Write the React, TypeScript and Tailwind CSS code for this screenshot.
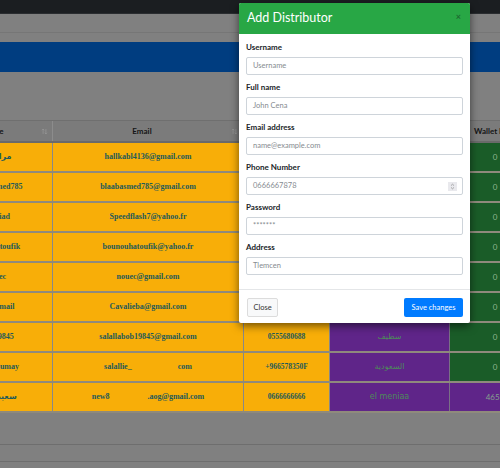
import React from "react";

type Row = {
  name: string;
  email: React.ReactNode;
  phone: string;
  addr: string;
  wallet: string;
  walletPurple?: boolean;
};

const rows: Row[] = [
  { name: "مراد الم", email: "hallkabl4136@gmail.com", phone: "0556644136", addr: "الجزائر", wallet: "0" },
  { name: "blaabasmed785", email: "blaabasmed785@gmail.com", phone: "0661785785", addr: "وهران", wallet: "0" },
  { name: "ben fiad", email: "Speedflash7@yahoo.fr", phone: "0770123456", addr: "سطيف", wallet: "0" },
  { name: "bounou toufik", email: "bounouhatoufik@yahoo.fr", phone: "0550987654", addr: "باتنة", wallet: "0" },
  { name: "nouec", email: "nouec@gmail.com", phone: "0666112233", addr: "بسكرة", wallet: "0" },
  { name: "cavalgmail", email: "Cavalieba@gmail.com", phone: "0699445566", addr: "عنابة", wallet: "0" },
  { name: "salal19845", email: "salallabob19845@gmail.com", phone: "0555680688", addr: "سطيف", wallet: "0" },
  {
    name: "salah djumay",
    email: (
      <>
        <span>salallie_</span>
        <span className="inline-block w-[46px]" />
        <span>com</span>
      </>
    ),
    phone: "+966578350F",
    addr: "السعودية",
    wallet: "0",
  },
  {
    name: "سعيد سلي",
    email: (
      <>
        <span>new8</span>
        <span className="inline-block w-[38px]" />
        <span>.aog@gmail.com</span>
      </>
    ),
    phone: "0666666666",
    addr: "el meniaa",
    wallet: "4659",
    walletPurple: true,
  },
];

function SortIcon() {
  return (
    <svg width="7" height="7" viewBox="0 0 10 10" className="shrink-0">
      <path d="M3 1.5 V8.5 M1.3 3.2 L3 1.5 L4.7 3.2" stroke="#9a9a9a" strokeWidth="1" fill="none" />
      <path d="M7 1.5 V8.5 M5.3 6.8 L7 8.5 L8.7 6.8" stroke="#9a9a9a" strokeWidth="1" fill="none" />
    </svg>
  );
}

function Field({ label, placeholder, spinner }: { label: string; placeholder: string; spinner?: boolean }) {
  return (
    <div className="mb-[7px] flex flex-col">
      <div className="h-[11px] mb-[4px] text-[8px] leading-[11px] font-bold text-[#212529]">{label}</div>
      <div className="h-[18px] rounded-[2px] border border-[#ced4da] bg-white flex items-center pl-[6px] pr-[5px]">
        <span className="flex-1 text-[7.5px] text-[#868b90]">{placeholder}</span>
        {spinner && (
          <span className="w-[9px] h-[9px] bg-[#e9e9ed] flex items-center justify-center">
            <svg width="5" height="7" viewBox="0 0 5 7">
              <path d="M1 2.6 L2.5 1.2 L4 2.6 M1 4.4 L2.5 5.8 L4 4.4" stroke="#8a8a8a" strokeWidth="0.7" fill="none" />
            </svg>
          </span>
        )}
      </div>
    </div>
  );
}

export default function App() {
  const cellText = "text-[8px] font-bold text-[#1d5a5a]";
  return (
    <div
      className="relative w-[500px] h-[468px] overflow-hidden bg-[#808080]"
      style={{ fontFamily: "Lato, 'Noto Sans', sans-serif" }}
    >
      {/* navbar */}
      <div className="h-[14px] bg-[#1b1e21] border-b border-[#2a2d30]" />
      <div className="h-[19px] border-b border-[#767676]" />
      <div className="h-[9px]" />
      {/* blue band */}
      <div className="h-[30px] bg-[#003d80]" />
      <div className="h-[48px]" />

      {/* table */}
      <div className="w-full overflow-hidden">
        <div className="ml-[-60px] w-[600px]">
          {/* header */}
          <div className="grid grid-cols-[113px_191px_86px_120px_90px] h-[23px] bg-[#7b7b7b] border-t border-[#6f6f6f] border-b-2 border-b-[#6a6a6a]">
            <div className="flex items-center border-r border-[#8c8c8c] pr-[4px]">
              <span className="flex-1 text-center text-[8px] font-bold text-[#151515] pr-[10px]">Username</span>
              <SortIcon />
            </div>
            <div className="flex items-center border-r border-[#8c8c8c] pr-[5px]">
              <span className="flex-1 text-center text-[8px] font-bold text-[#151515]">Email</span>
              <SortIcon />
            </div>
            <div className="flex items-center border-r border-[#8c8c8c] pr-[5px]">
              <span className="flex-1 text-center text-[8px] font-bold text-[#151515]">Phone</span>
              <SortIcon />
            </div>
            <div className="flex items-center border-r border-[#8c8c8c] pr-[5px]">
              <span className="flex-1 text-center text-[8px] font-bold text-[#151515]">Address</span>
              <SortIcon />
            </div>
            <div className="flex items-center pl-[24px]">
              <span className="text-[8px] font-bold text-[#151515] whitespace-nowrap">Wallet Balance</span>
            </div>
          </div>
          {/* rows */}
          {rows.map((r, i) => (
            <div
              key={i}
              className="grid grid-cols-[113px_191px_86px_120px_90px] h-[30px] border-b-2 border-[#8f8a7c]"
            >
              <div
                className={`bg-[#f8ae08] border-r border-[#888888] flex items-center justify-center whitespace-nowrap ${cellText}`}
                style={{ fontFamily: "'Liberation Serif', 'DejaVu Sans', serif" }}
              >
                {r.name}
              </div>
              <div
                className={`bg-[#f8ae08] border-r border-[#888888] flex items-center justify-center whitespace-nowrap ${cellText}`}
                style={{ fontFamily: "'Liberation Serif', serif" }}
              >
                {r.email}
              </div>
              <div
                className="bg-[#f8ae08] border-r border-[#888888] flex items-center justify-center whitespace-nowrap text-[7.5px] font-bold text-[#1d5a5a]"
                style={{ fontFamily: "'Liberation Serif', serif" }}
              >
                {r.phone}
              </div>
              <div
                className="bg-[#5f2589] border-r border-[#7a6f86] flex items-center justify-center whitespace-nowrap text-[8px] text-[#4d8a5a]"
                style={{ fontFamily: "'DejaVu Sans', sans-serif" }}
              >
                {r.addr}
              </div>
              <div
                className={`${r.walletPurple ? "bg-[#5f2589] text-[#84a08e]" : "bg-[#1a5c28] text-[#8fb48f]"} flex items-center justify-center text-[8px]`}
              >
                {r.wallet}
              </div>
            </div>
          ))}
        </div>
      </div>

      {/* below table */}
      <div className="h-[32px] border-b border-[#6e6e6e]" />
      <div className="h-[17px] border-b border-[#6e6e6e]" />

      {/* modal */}
      <div className="absolute left-[239px] top-[3px] w-[231px] h-[320px] bg-white rounded-[2px] shadow-[0_3px_9px_rgba(0,0,0,0.55)] flex flex-col overflow-hidden">
        <div className="h-[31px] bg-[#28a745] flex items-center justify-between pl-[8px] pr-[9px]">
          <span className="text-[12.5px] text-white">Add Distributor</span>
          <span className="text-[9px] font-bold text-[#1d6b31] leading-none mb-[4px]">×</span>
        </div>
        <div className="pt-[8px] pb-[7px] px-[7px] border-b border-[#e4e6e8]">
          <Field label="Username" placeholder="Username" />
          <Field label="Full name" placeholder="John Cena" />
          <Field label="Email address" placeholder="name@example.com" />
          <Field label="Phone Number" placeholder="0666667878" spinner />
          <Field label="Password" placeholder="*******" />
          <Field label="Address" placeholder="Tlemcen" />
        </div>
        <div className="flex items-start justify-between pt-[8px] pl-[8px] pr-[7px]">
          <button className="h-[19px] w-[31px] rounded-[2px] border border-[#dcdcdc] bg-[#f8f9fa] text-[7.5px] text-[#333]">
            Close
          </button>
          <button className="h-[19px] w-[59px] rounded-[2px] bg-[#007bff] text-[7.5px] text-white">
            Save changes
          </button>
        </div>
      </div>
    </div>
  );
}
